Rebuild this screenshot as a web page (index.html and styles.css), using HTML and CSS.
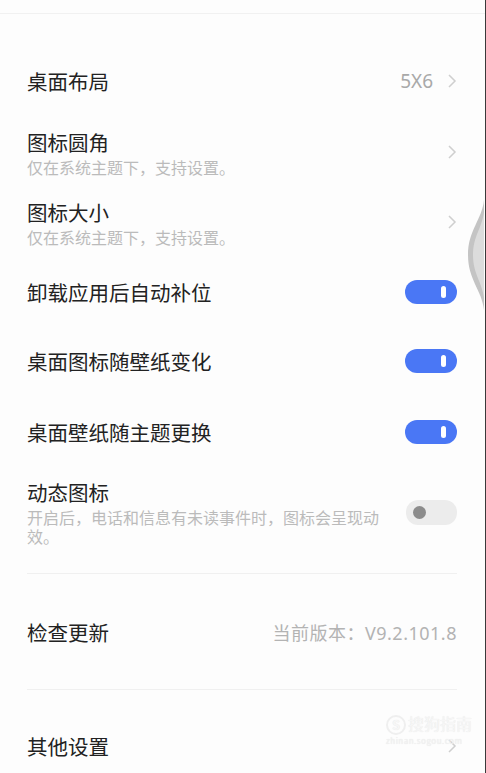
FILE: index.html
```html
<!doctype html>
<html>
<head>
<meta charset="utf-8">
<title>桌面设置</title>
<link rel="stylesheet" href="styles.css">
</head>
<body>
<div class="page">
	<div class="topbar"></div>

	<div class="list">
		<div class="row r1">
			<div class="title">桌面布局</div>
			<div class="extra"><span class="value">5X6</span><svg class="arrow" width="10" height="16" viewBox="0 0 10 16"><path d="M2 2 L8 8 L2 14" fill="none" stroke="#cfcfcf" stroke-width="1.5"/></svg></div>
		</div>
		<div class="row r2">
			<div class="text">
				<div class="title">图标圆角</div>
				<div class="sub">仅在系统主题下，支持设置。</div>
			</div>
			<div class="extra"><svg class="arrow" width="10" height="16" viewBox="0 0 10 16"><path d="M2 2 L8 8 L2 14" fill="none" stroke="#cfcfcf" stroke-width="1.5"/></svg></div>
		</div>
		<div class="row r3">
			<div class="text">
				<div class="title">图标大小</div>
				<div class="sub">仅在系统主题下，支持设置。</div>
			</div>
			<div class="extra"><svg class="arrow" width="10" height="16" viewBox="0 0 10 16"><path d="M2 2 L8 8 L2 14" fill="none" stroke="#cfcfcf" stroke-width="1.5"/></svg></div>
		</div>
		<div class="row r4">
			<div class="title">卸载应用后自动补位</div>
			<div class="switch on"><i></i></div>
		</div>
		<div class="row r5">
			<div class="title">桌面图标随壁纸变化</div>
			<div class="switch on"><i></i></div>
		</div>
		<div class="row r6">
			<div class="title">桌面壁纸随主题更换</div>
			<div class="switch on"><i></i></div>
		</div>
		<div class="row r7">
			<div class="text">
				<div class="title">动态图标</div>
				<div class="sub wide">开启后，电话和信息有未读事件时，图标会呈现动效。</div>
			</div>
			<div class="switch off"><i></i></div>
		</div>
	</div>

	<div class="line gap"></div>

	<div class="row r8">
		<div class="title">检查更新</div>
		<div class="version">当前版本：V9.2.101.8</div>
	</div>

	<div class="line"></div>

	<div class="row r9">
		<div class="title">其他设置</div>
		<div class="extra"><svg class="arrow" width="10" height="16" viewBox="0 0 10 16"><path d="M2 2 L8 8 L2 14" fill="none" stroke="#cfcfcf" stroke-width="1.5"/></svg></div>
	</div>

	<div class="mark">
		<div class="mark-logo"><b>S</b>搜狗指南</div>
		<div class="mark-url">zhinan.sogou.com</div>
	</div>

	<svg class="edge" width="18" height="110" viewBox="0 0 18 110">
		<path d="M18 0 C16 20 2 30 2 55 C2 80 16 90 18 110 Z" fill="#c4c4c4"/>
		<path d="M18 12 C16 28 7 36 7 55 C7 74 16 82 18 98 Z" fill="#dcdcdc"/>
	</svg>
</div>
</body>
</html>
```

FILE: styles.css
```css
*{margin:0;padding:0;box-sizing:border-box;}
html,body{overflow:hidden;}
body{background:#fdfdfd;font-family:"Noto Sans CJK SC","Noto Sans",sans-serif;color:#222;}
.page{position:relative;width:486px;height:773px;border-right:1px solid #3a3a3a;overflow:hidden;}
.topbar{height:14px;border-bottom:1px solid #f1f1f1;}
.list{margin-top:32px;}
.row{display:flex;align-items:center;justify-content:space-between;padding:0 28px 0 27px;}
.r1{height:70px;}
.r2{height:72px;}
.r3{height:68px;}
.r4{height:72px;}
.r5{height:66px;}
.r6{height:76px;}
.r7{height:84px;}
.r8{height:115px;}
.r9{height:112px;}
.title{font-size:20.5px;line-height:28px;color:#222;}
.sub{font-size:16px;line-height:19px;margin-top:2px;color:#bbbbbb;}
.sub.wide{width:356px;}
.extra{display:flex;align-items:center;}
.value{font-size:19px;color:#a9a9a9;margin-right:14px;font-family:"Noto Sans",sans-serif;}
.arrow{display:block;}
.version{font-size:18px;color:#b3b3b3;font-family:"Noto Sans","Noto Sans CJK SC",sans-serif;letter-spacing:0.5px;}
.switch{width:52px;height:24px;border-radius:12px;position:relative;flex:none;}
.switch.on{background:#4a77f5;}
.switch.on i{position:absolute;right:11px;top:6px;width:5px;height:12px;border-radius:3px;background:#fff;}
.switch.off{background:#ececec;height:25px;width:51px;}
.switch.off i{position:absolute;left:7px;top:6px;width:13px;height:13px;border-radius:50%;background:#8c8c8c;}
.line{height:1px;background:#f0f0f0;margin:0 28px 0 27px;}
.line.gap{margin-top:19px;}
.mark{position:absolute;left:386px;top:712px;color:#f6f6f6;text-shadow:0 0 1px #e2e2e2;}
.mark-logo{font-size:16px;line-height:22px;}
.mark-logo b{display:inline-block;width:20px;height:20px;border-radius:50%;border:2px solid #efefef;text-align:center;line-height:16px;font-size:13px;margin-right:2px;}
.mark-url{font-size:8px;color:#f2f2f2;letter-spacing:0.5px;}
.edge{position:absolute;right:1px;top:200px;}
```
